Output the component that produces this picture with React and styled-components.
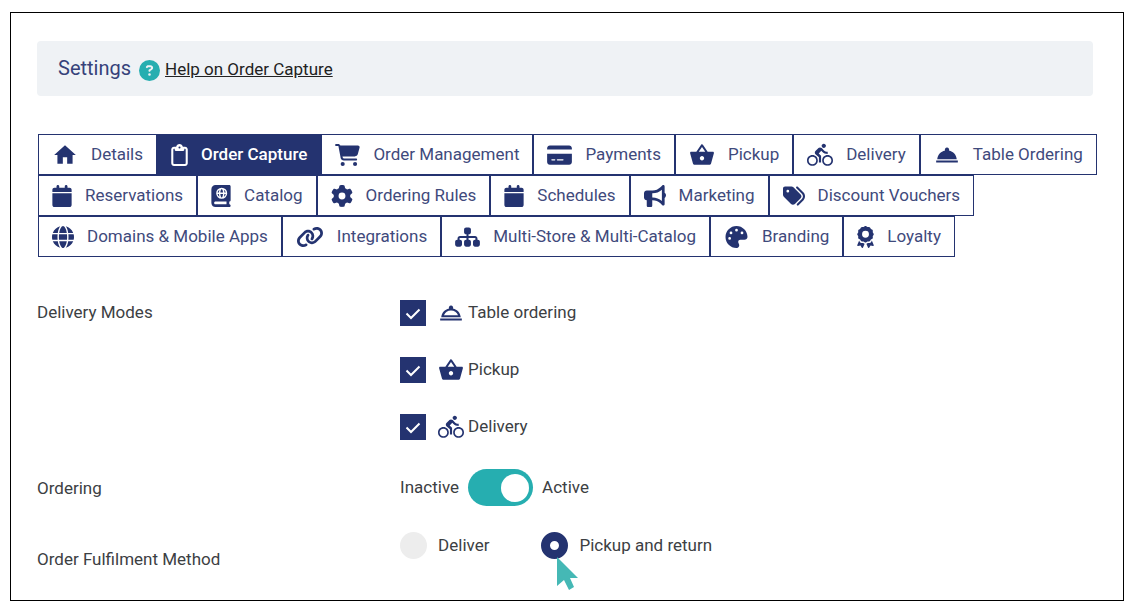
import React, { useState } from "react"
import styled, { createGlobalStyle } from "styled-components"
import {
  FaAward,
  FaBookAtlas,
  FaBullhorn,
  FaCalendar,
  FaCartShopping,
  FaCircleQuestion,
  FaCreditCard,
  FaGear,
  FaGlobe,
  FaLink,
  FaPalette,
  FaRegClipboard,
  FaSitemap,
  FaTags,
} from "react-icons/fa6"
import {
  MdDirectionsBike,
  MdHome,
  MdOutlineRoomService,
  MdRoomService,
  MdShoppingBasket,
} from "react-icons/md"

const navy = "#243370"
const teal = "#26aeb0"

const GlobalStyle = createGlobalStyle`
  * {
    box-sizing: border-box;
  }

  body {
    margin: 0;
    background: #fff;
    color: #3c4043;
    font-family: Roboto, "Liberation Sans", sans-serif;
    font-size: 17px;
    line-height: 24px;
  }
`

const Page = styled.main`
  margin: 12px 11px 9px 10px;
  padding: 28px 18px 29px 26px;
  border: 1px solid #000;
`

const Header = styled.header`
  display: flex;
  align-items: center;
  margin-right: 12px;
  padding: 14px 21px 15px;
  background-color: #eff2f5;
  border-radius: 4px;
`

const Title = styled.h1`
  margin: 0 8px 0 0;
  color: #36427a;
  font-size: 20px;
  font-weight: 400;
  line-height: 24px;
`

const HelpIcon = styled(FaCircleQuestion)`
  margin: 4px 5px 0 0;
  color: ${teal};
  font-size: 21px;
`

const HelpLink = styled.a`
  padding-top: 2px;
  color: #222;
  text-decoration: underline;
`

const Tabs = styled.nav`
  display: flex;
  flex-wrap: wrap;
  margin: 38px 0 0 1px;
`

const Tab = styled.button`
  display: flex;
  align-items: center;
  gap: 13px;
  height: 41px;
  padding: 0 13px;
  color: ${props => (props.$active ? "#fff" : "#3f4a7c")};
  background-color: ${props => (props.$active ? navy : "#fff")};
  border: 1px solid ${navy};
  font-family: inherit;
  font-size: 17px;
  font-weight: ${props => (props.$active ? 500 : 400)};
  line-height: 24px;
  cursor: pointer;

  svg {
    width: ${props => props.$iconWidth}px;
    height: ${props => (props.$iconWidth === 26 ? 26 : 22)}px;
    color: ${props => (props.$active ? "#fff" : navy)};
  }
`

const Text = styled.span`
  padding-bottom: 2px;
`

const Form = styled.form`
  margin-top: 43px;
`

const Row = styled.div`
  display: flex;
  align-items: ${props => props.$align || "flex-start"};
  margin-bottom: ${props => props.$space || 0}px;
`

const RowLabel = styled.div`
  flex: 0 0 34%;
  padding-top: ${props => props.$top || 0}px;
`

const Field = styled.div`
  display: flex;
  flex-direction: ${props => (props.$column ? "column" : "row")};
  gap: ${props => props.$gap || 0}px;
`

const Mode = styled.label`
  display: flex;
  align-items: center;
  height: 26px;
  cursor: pointer;

  > svg {
    width: 26px;
    height: 26px;
    margin: 0 4px 0 12px;
    color: ${navy};
  }
`

const Box = styled.span`
  display: grid;
  width: 26px;
  height: 26px;

  input,
  svg {
    grid-area: 1 / 1;
    width: 26px;
    height: 26px;
    margin: 0;
  }

  input {
    appearance: none;
    background-color: #fff;
    border: 1px solid ${navy};
  }

  input:checked {
    background-color: ${navy};
  }

  svg {
    fill: none;
    stroke: #fff;
    stroke-width: 2;
    pointer-events: none;
  }
`

const SwitchLabel = styled.label`
  display: flex;
  align-items: center;
  gap: 9px;
  height: 37px;
  cursor: pointer;
`

const Switch = styled.input`
  display: flex;
  align-items: center;
  appearance: none;
  width: 65px;
  height: 37px;
  margin: 0;
  padding: 0 4px;
  justify-content: ${props => (props.checked ? "flex-end" : "flex-start")};
  background-color: ${props => (props.checked ? teal : "#ccc")};
  border-radius: 19px;
  cursor: pointer;

  &::before {
    content: "";
    width: 28px;
    height: 28px;
    background-color: #fff;
    border-radius: 50%;
  }
`

const Choice = styled.label`
  position: relative;
  display: flex;
  align-items: center;
  gap: 11px;
  height: 27px;
  cursor: pointer;
`

const Radio = styled.input`
  appearance: none;
  width: 27px;
  height: 27px;
  margin: 0;
  background-color: #ededed;
  border-radius: 50%;
  cursor: pointer;

  &:checked {
    background-color: #fff;
    border: 9px solid ${navy};
  }
`

const Cursor = styled.svg`
  position: absolute;
  top: 25px;
  left: 16px;
  width: 22px;
  height: 33px;
  fill: #45b8b5;
  pointer-events: none;
`

const tabs = [
  { name: "Details", icon: MdHome, width: 26 },
  { name: "Order Capture", icon: FaRegClipboard, width: 17 },
  { name: "Order Management", icon: FaCartShopping, width: 25 },
  { name: "Payments", icon: FaCreditCard, width: 25 },
  { name: "Pickup", icon: MdShoppingBasket, width: 26 },
  { name: "Delivery", icon: MdDirectionsBike, width: 26 },
  { name: "Table Ordering", icon: MdRoomService, width: 26 },
  { name: "Reservations", icon: FaCalendar, width: 20 },
  { name: "Catalog", icon: FaBookAtlas, width: 20 },
  { name: "Ordering Rules", icon: FaGear, width: 22 },
  { name: "Schedules", icon: FaCalendar, width: 20 },
  { name: "Marketing", icon: FaBullhorn, width: 22 },
  { name: "Discount Vouchers", icon: FaTags, width: 22 },
  { name: "Domains & Mobile Apps", icon: FaGlobe, width: 22 },
  { name: "Integrations", icon: FaLink, width: 28 },
  { name: "Multi-Store & Multi-Catalog", icon: FaSitemap, width: 25 },
  { name: "Branding", icon: FaPalette, width: 25 },
  { name: "Loyalty", icon: FaAward, width: 17 },
]

const modes = [
  { name: "Table ordering", icon: MdOutlineRoomService },
  { name: "Pickup", icon: MdShoppingBasket },
  { name: "Delivery", icon: MdDirectionsBike },
]

function Checkbox({ label, icon: Icon }) {
  const [checked, setChecked] = useState(true)
  return (
    <Mode>
      <Box>
        <input
          type="checkbox"
          checked={checked}
          onChange={e => setChecked(e.target.checked)}
        />
        <svg viewBox="0 0 26 26">
          <path d="M6.5 13.5l4.5 4.5 8.5-8.5" />
        </svg>
      </Box>
      <Icon />
      <Text>{label}</Text>
    </Mode>
  )
}

function App() {
  const [tab, setTab] = useState("Order Capture")
  const [active, setActive] = useState(true)
  const [method, setMethod] = useState("return")

  return (
    <>
      <GlobalStyle />
      <Page>
        <Header>
          <Title>Settings</Title>
          <HelpIcon />
          <HelpLink href="#help">Help on Order Capture</HelpLink>
        </Header>
        <Tabs>
          {tabs.map(({ name, icon: Icon, width }) => (
            <Tab
              key={name}
              type="button"
              $active={name === tab}
              $iconWidth={width}
              onClick={() => setTab(name)}
            >
              <Icon />
              <Text>{name}</Text>
            </Tab>
          ))}
        </Tabs>
        <Form>
          <Row $space={29}>
            <RowLabel>Delivery Modes</RowLabel>
            <Field $column $gap={31}>
              {modes.map(({ name, icon }) => (
                <Checkbox key={name} label={name} icon={icon} />
              ))}
            </Field>
          </Row>
          <Row $align="center" $space={26}>
            <RowLabel>Ordering</RowLabel>
            <Field>
              <SwitchLabel>
                <Text>Inactive</Text>
                <Switch
                  type="checkbox"
                  role="switch"
                  checked={active}
                  onChange={e => setActive(e.target.checked)}
                />
                <Text>Active</Text>
              </SwitchLabel>
            </Field>
          </Row>
          <Row>
            <RowLabel $top={15}>Order Fulfilment Method</RowLabel>
            <Field $gap={52}>
              <Choice>
                <Radio
                  type="radio"
                  name="method"
                  checked={method === "deliver"}
                  onChange={() => setMethod("deliver")}
                />
                <Text>Deliver</Text>
              </Choice>
              <Choice>
                <Radio
                  type="radio"
                  name="method"
                  checked={method === "return"}
                  onChange={() => setMethod("return")}
                />
                <Text>Pickup and return</Text>
                <Cursor viewBox="0 0 22 33">
                  <path d="M0 0v29l7-6 5 10 5-3-4-9h8z" />
                </Cursor>
              </Choice>
            </Field>
          </Row>
        </Form>
      </Page>
    </>
  )
}

export default App
